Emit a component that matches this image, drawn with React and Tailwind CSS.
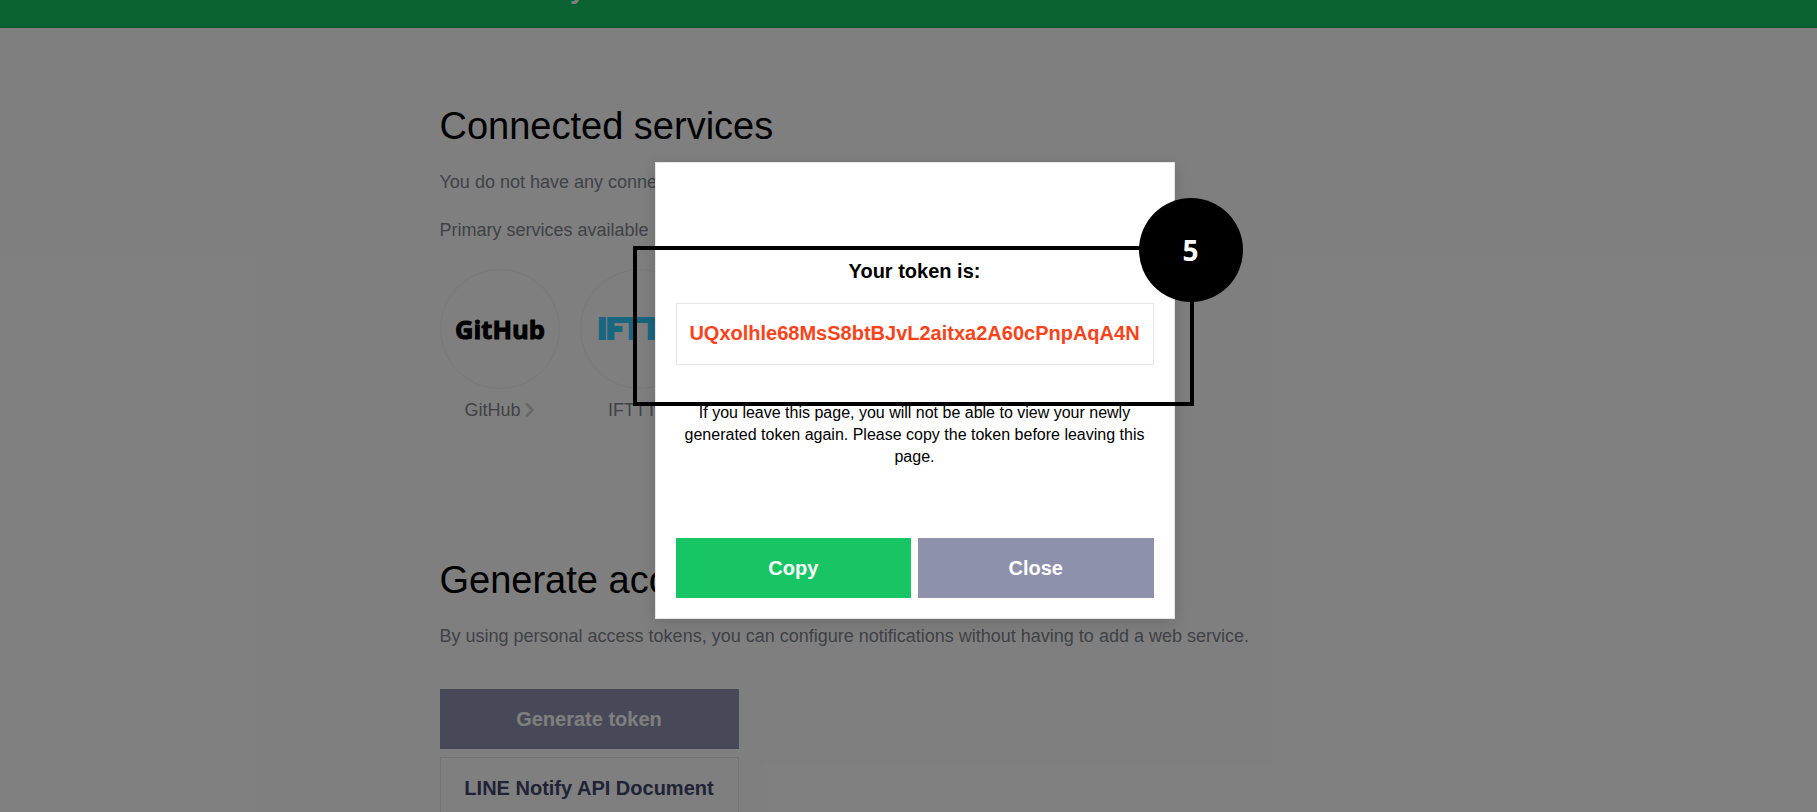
import React from "react";

const services = [
  {
    name: "GitHub",
    logo: (
      <text x="60" y="70" textAnchor="middle" fontFamily="Open Sans" fontSize="26" fontWeight="700" fill="#000" stroke="#000" strokeWidth="1">GitHub</text>
    ),
  },
  {
    name: "IFTTT",
    logo: (
      <text x="17" y="70" fontFamily="Roboto" fontSize="30" fontWeight="900" fill="#33ccff" stroke="#33ccff" strokeWidth="2">IFTTT</text>
    ),
  },
];

function Service({ name, logo }) {
  return (
    <li className="flex w-[120px] flex-col items-center">
      <svg viewBox="0 0 120 120" className="size-[120px] rounded-full border border-[#f2f2f2]" aria-hidden="true">
        {logo}
      </svg>
      <a href="#service" className="mt-2 flex items-center gap-1 text-lg leading-[26px]">
        {name}
        <svg viewBox="0 0 10 16" className="h-4 w-[10px]" fill="none" stroke="#d0d0d3" strokeWidth="2.5" aria-hidden="true">
          <path d="M1 1.500 7.500 8 1 14.500" />
        </svg>
      </a>
    </li>
  );
}

function Modal() {
  return (
    <section role="dialog" aria-labelledby="token-title" className="relative w-[520px] border border-[#e6e6e6] bg-white px-5 pt-24 pb-5 text-center text-black shadow-[0_4px_16px_rgba(0,0,0,0.15)]">
      <h2 id="token-title" className="text-xl leading-6 font-bold">Your token is:</h2>
      <p className="mt-5 border border-[#e6e6e6] pt-[15px] pb-[17px] text-xl leading-7 font-bold text-[#f9431b]">UQxolhle68MsS8btBJvL2aitxa2A60cPnpAqA4N</p>
      <p className="mt-[37px] leading-[22px]">
        If you leave this page, you will not be able to view your newly generated token again. Please copy the token before leaving this page.
      </p>
      <div className="mt-[70px] grid grid-cols-2 gap-[7px] text-xl font-bold text-white">
        <button type="button" className="h-[60px] bg-[#17c564]">Copy</button>
        <button type="button" className="h-[60px] bg-[#8e91ac]">Close</button>
      </div>
      <div className="pointer-events-none absolute top-[83px] -right-5 -left-[23px] h-40 border-4 border-black" />
      <span className="absolute top-[35px] -right-[69px] flex size-[104px] items-center justify-center rounded-full bg-black font-['Open_Sans',sans-serif] text-[28px] font-bold text-white">5</span>
    </section>
  );
}

export default function App() {
  return (
    <div className="relative h-screen overflow-hidden bg-white font-['Liberation_Sans',Arial,sans-serif] text-[#80848f]">
      <header className="-mt-[50px] h-[78px] border-b border-[#14ac58] bg-[#17c564]">
        <div className="mx-auto flex h-full max-w-[938px] items-center">
          <span className="text-[27px] leading-7 font-bold text-white">LINE Notify</span>
        </div>
      </header>
      <main className="mx-auto max-w-[938px] pt-[75px]">
        <h1 className="text-[38px] leading-[46px] text-black">Connected services</h1>
        <p className="mt-5 text-lg leading-[26px]">You do not have any connected services.</p>
        <p className="mt-[22px] text-lg leading-[26px]">Primary services available</p>
        <ul className="mt-[26px] flex gap-5">
          {services.map((s) => <Service key={s.name} {...s} />)}
        </ul>
        <h2 className="mt-[134px] text-[38px] leading-[46px] text-black">Generate access token (For developers)</h2>
        <p className="mt-5 text-lg leading-[26px]">By using personal access tokens, you can configure notifications without having to add a web service.</p>
        <div className="mt-10 flex w-[299px] flex-col gap-2 text-xl font-bold">
          <button type="button" className="h-[60px] bg-[#9093b0] text-white">Generate token</button>
          <a href="#document" className="flex h-[62px] items-center justify-center border border-[#e6e6e6] text-[#40476b]">LINE Notify API Document</a>
        </div>
      </main>
      <div className="absolute inset-0 flex items-center justify-center bg-black/50 pb-[31px] pl-3">
        <Modal />
      </div>
    </div>
  );
}
